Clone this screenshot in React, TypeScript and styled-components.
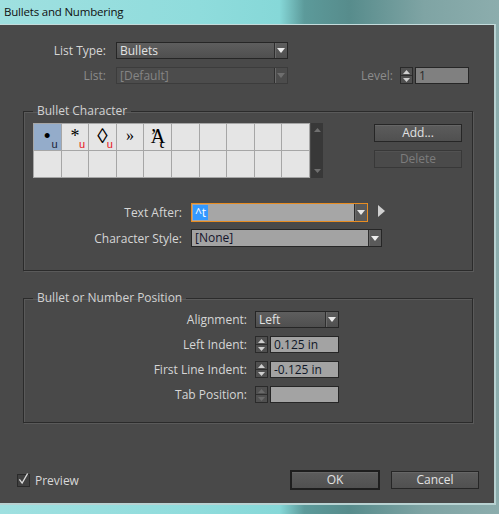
import styled, { createGlobalStyle } from "styled-components"

const FONT = `"Open Sans", "Liberation Sans", sans-serif`

const GlobalStyle = createGlobalStyle`
  html, body {
    margin: 0;
    padding: 0;
  }
  body {
    width: 499px;
    height: 514px;
    overflow: hidden;
    font-family: ${FONT};
    font-size: 12px;
    background: linear-gradient(90deg, #9fe0e0 0%, #8fdcdc 40%, #86d8d8 56%, #5c9a9a 61%, #578c8c 70%, #7fa4a4 85%, #8cadad 100%);
  }
  * { box-sizing: border-box; }
`

type Dir = "up" | "down" | "right"

function Tri({ dir, size = 7, color = "#e6e6e6" }: { dir: Dir; size?: number; color?: string }) {
  const h = Math.round(size * 0.6)
  if (dir === "right") {
    return (
      <svg width={h} height={size} viewBox={`0 0 ${h} ${size}`}>
        <polygon points={`0,0 ${h},${size / 2} 0,${size}`} fill={color} />
      </svg>
    )
  }
  const pts = dir === "down" ? `0,0 ${size},0 ${size / 2},${h}` : `0,${h} ${size},${h} ${size / 2},0`
  return (
    <svg width={size} height={h} viewBox={`0 0 ${size} ${h}`}>
      <polygon points={pts} fill={color} />
    </svg>
  )
}

function Select({ value, width, disabled, light }: { value: string; width: number; disabled?: boolean; light?: boolean }) {
  return (
    <SSelect $width={width} $disabled={disabled} $light={light}>
      <SValue>{value}</SValue>
      <SArrowBox $light={light}>
        <Tri dir="down" size={8} color={disabled ? "#6e6e6e" : "#ececec"} />
      </SArrowBox>
    </SSelect>
  )
}

function Spinner({ disabled }: { disabled?: boolean }) {
  const c = disabled ? "#6a6a6a" : "#cfcfcf"
  return (
    <SSpinner>
      <SSpinHalf><Tri dir="up" size={7} color={c} /></SSpinHalf>
      <SSpinHalf><Tri dir="down" size={7} color={c} /></SSpinHalf>
    </SSpinner>
  )
}

const cells: { glyph: string; size: number; mark?: "dark" | "red"; tight?: boolean }[] = [
  { glyph: "•", size: 21, mark: "dark" },
  { glyph: "*", size: 18, mark: "red" },
  { glyph: "◊", size: 21, mark: "red" },
  { glyph: "»", size: 16 },
  { glyph: "ʼĄ", size: 20, tight: true },
]

export default function App() {
  return (
    <>
      <GlobalStyle />
      <SWindow>
        <STitleBar>Bullets and Numbering</STitleBar>
        <SDialog>
          <STopForm>
            <SRow>
              <SLabel $width={106}>List Type:</SLabel>
              <Select value="Bullets" width={172} />
            </SRow>
            <SRow>
              <SLabel $width={106} $disabled>List:</SLabel>
              <Select value="[Default]" width={172} disabled />
              <SLevel>
                <SLabel $disabled>Level:</SLabel>
                <SSpinGroup>
                  <Spinner />
                  <SInput $width={54} $dim>1</SInput>
                </SSpinGroup>
              </SLevel>
            </SRow>
          </STopForm>

          <SGroup $pad="4px 10px 23px 9px">
            <SLegend>Bullet Character</SLegend>
            <SCharRow>
              <SGridWrap>
                <SGrid>
                  {Array.from({ length: 20 }).map((_, i) => {
                    const c = cells[i]
                    return (
                      <SCell key={i} $selected={i === 0}>
                        {c && <SGlyph $size={c.size} $tight={c.tight}>{c.glyph}</SGlyph>}
                        {c?.mark && <SMark $red={c.mark === "red"}>u</SMark>}
                      </SCell>
                    )
                  })}
                </SGrid>
                <SScrollbar>
                  <Tri dir="up" size={7} color="#6f6f6f" />
                  <Tri dir="down" size={7} color="#6f6f6f" />
                </SScrollbar>
              </SGridWrap>
              <SButtonCol>
                <SButton $width={88}>Add...</SButton>
                <SButton $width={88} $disabled>Delete</SButton>
              </SButtonCol>
            </SCharRow>

            <SFieldRow $top={25} $gap={9}>
              <SLabel $width={149}>Text After:</SLabel>
              <SCombo>
                <SComboText><SHighlight>^t</SHighlight></SComboText>
                <SArrowBox $light>
                  <Tri dir="down" size={8} />
                </SArrowBox>
              </SCombo>
              <SSideArrow>
                <Tri dir="right" size={12} color="#d0d0d0" />
              </SSideArrow>
            </SFieldRow>
            <SFieldRow $top={7} $gap={9}>
              <SLabel $width={149}>Character Style:</SLabel>
              <Select value="[None]" width={191} light />
            </SFieldRow>
          </SGroup>

          <SGroup $pad="5px 10px 19px 9px">
            <SLegend>Bullet or Number Position</SLegend>
            <SFieldRow $top={0} $gap={8}>
              <SLabel $width={214}>Alignment:</SLabel>
              <Select value="Left" width={84} />
            </SFieldRow>
            <SFieldRow $top={8} $gap={8}>
              <SLabel $width={214}>Left Indent:</SLabel>
              <SSpinGroup>
                <Spinner />
                <SInput $width={69}>0.125 in</SInput>
              </SSpinGroup>
            </SFieldRow>
            <SFieldRow $top={8} $gap={8}>
              <SLabel $width={214}>First Line Indent:</SLabel>
              <SSpinGroup>
                <Spinner />
                <SInput $width={69}>-0.125 in</SInput>
              </SSpinGroup>
            </SFieldRow>
            <SFieldRow $top={8} $gap={8}>
              <SLabel $width={214}>Tab Position:</SLabel>
              <SSpinGroup>
                <Spinner disabled />
                <SInput $width={69}></SInput>
              </SSpinGroup>
            </SFieldRow>
          </SGroup>

          <SFooter>
            <SCheckLabel>
              <SCheckbox>
                <svg width="12" height="14" viewBox="0 0 12 14">
                  <polyline points="1.5,7.5 4.5,11.5 10.5,1" fill="none" stroke="#dcdcdc" strokeWidth="1.5" />
                </svg>
              </SCheckbox>
              Preview
            </SCheckLabel>
            <SFooterButtons>
              <SButton $width={90} $default>OK</SButton>
              <SButton $width={88}>Cancel</SButton>
            </SFooterButtons>
          </SFooter>
        </SDialog>
      </SWindow>
    </>
  )
}

const SWindow = styled.div`
  display: flex;
  flex-direction: column;
  width: 499px;
  height: 514px;
`
const STitleBar = styled.div`
  height: 24px;
  padding-left: 4px;
  line-height: 23px;
  font-size: 11.5px;
  letter-spacing: -0.2px;
  color: #101010;
`
const SDialog = styled.div`
  display: flex;
  flex-direction: column;
  width: 496px;
  height: 481px;
  background: #494949;
  border-top: 1px solid #c4dcdc;
  border-right: 2px solid #b8d2d2;
  border-bottom: 2px solid #b8d2d2;
  color: #d4d4d4;
`
const STopForm = styled.div`
  display: flex;
  flex-direction: column;
  gap: 8px;
  padding: 17px 25px 0 0;
`
const SRow = styled.div`
  display: flex;
  align-items: center;
  gap: 10px;
  height: 17px;
`
const SLabel = styled.span<{ $width?: number; $disabled?: boolean }>`
  ${(p) => (p.$width ? `width: ${p.$width}px;` : "")}
  flex-shrink: 0;
  text-align: right;
  white-space: nowrap;
  color: ${(p) => (p.$disabled ? "#8c8c8c" : "#d6d6d6")};
`
const SSelect = styled.div<{ $width: number; $disabled?: boolean; $light?: boolean }>`
  display: flex;
  width: ${(p) => p.$width}px;
  height: ${(p) => (p.$light ? 18 : 17)}px;
  border: 1px solid ${(p) => (p.$disabled ? "#3c3c3c" : "#262626")};
  background: ${(p) =>
    p.$light ? "#a3a3a3" : p.$disabled ? "#4c4c4c" : "linear-gradient(#5e5e5e, #4f4f4f)"};
  color: ${(p) => (p.$light ? "#14142a" : p.$disabled ? "#858585" : "#e2e2e2")};
  line-height: 15px;
`
const SValue = styled.span`
  flex: 1;
  padding-left: 3px;
  white-space: nowrap;
  overflow: hidden;
`
const SArrowBox = styled.span<{ $light?: boolean }>`
  display: flex;
  align-items: center;
  justify-content: center;
  width: 13px;
  border-left: 1px solid #2e2e2e;
  box-shadow: inset 1px 0 0 #6a6a6a;
  background: ${(p) => (p.$light ? "#5a5a5a" : "transparent")};
`
const SLevel = styled.div`
  display: flex;
  align-items: center;
  gap: 7px;
  margin-left: auto;
`
const SSpinGroup = styled.div`
  display: flex;
  gap: 2px;
  height: 17px;
`
const SSpinner = styled.div`
  display: flex;
  flex-direction: column;
  width: 13px;
  border: 1px solid #2a2a2a;
  background: #505050;
`
const SSpinHalf = styled.span`
  flex: 1;
  display: flex;
  align-items: center;
  justify-content: center;
  & + & {
    border-top: 1px solid #2e2e2e;
  }
`
const SInput = styled.div<{ $width: number; $dim?: boolean }>`
  width: ${(p) => p.$width}px;
  border: 1px solid #262626;
  background: ${(p) => (p.$dim ? "#808080" : "#a3a3a3")};
  color: ${(p) => (p.$dim ? "#2a2a2a" : "#101828")};
  padding-left: 3px;
  line-height: 15px;
  white-space: nowrap;
`
const SGroup = styled.fieldset<{ $pad: string }>`
  margin: 19px 21px 0 23px;
  min-width: 0;
  padding: ${(p) => p.$pad};
  border: 1px solid #2b2b2b;
  box-shadow: 1px 1px 0 #5a5a5a, inset 1px 1px 0 #5a5a5a;
`
const SLegend = styled.legend`
  margin-left: 0;
  padding: 0 4px;
  line-height: 16px;
  color: #d2d2d2;
`
const SCharRow = styled.div`
  display: flex;
  justify-content: space-between;
  align-items: flex-start;
`
const SGridWrap = styled.div`
  display: flex;
  gap: 1px;
`
const SGrid = styled.div`
  display: grid;
  grid-template-columns: repeat(10, 1fr);
  grid-auto-rows: 26px;
  gap: 1px;
  width: 277px;
  padding: 1px;
  background: #a6a6a6;
`
const SCell = styled.div<{ $selected?: boolean }>`
  position: relative;
  display: flex;
  align-items: center;
  justify-content: center;
  background: ${(p) => (p.$selected ? "#94acca" : "#e5e5e5")};
  color: #000;
`
const SGlyph = styled.span<{ $size: number; $tight?: boolean }>`
  font-family: "Liberation Serif", "DejaVu Serif", serif;
  font-size: ${(p) => p.$size}px;
  line-height: 1;
  margin-top: -2px;
  letter-spacing: ${(p) => (p.$tight ? "-6px" : "0")};
  ${(p) => (p.$tight ? "padding-right: 6px;" : "")}
`
const SMark = styled.span<{ $red?: boolean }>`
  position: absolute;
  right: 3px;
  bottom: 0;
  font-size: 11px;
  line-height: 11px;
  font-family: "Liberation Sans", sans-serif;
  color: ${(p) => (p.$red ? "#e8141c" : "#1a2236")};
`
const SScrollbar = styled.div`
  display: flex;
  flex-direction: column;
  justify-content: space-between;
  align-items: center;
  width: 12px;
  height: 55px;
  padding: 5px 0;
  background: #383838;
`
const SButtonCol = styled.div`
  display: flex;
  flex-direction: column;
  gap: 8px;
  margin-top: 1px;
`
const SButton = styled.div<{ $width: number; $disabled?: boolean; $default?: boolean }>`
  width: ${(p) => p.$width}px;
  height: ${(p) => (p.$default ? 20 : 18)}px;
  border: ${(p) => (p.$default ? "2px solid #1e1e1e" : `1px solid ${p.$disabled ? "#383838" : "#262626"}`)};
  background: ${(p) => (p.$disabled ? "#4a4a4a" : "linear-gradient(#5c5c5c, #505050)")};
  box-shadow: inset 0 1px 0 ${(p) => (p.$disabled ? "#525252" : "#666")};
  color: ${(p) => (p.$disabled ? "#7c7c7c" : "#e2e2e2")};
  text-align: center;
  line-height: ${(p) => (p.$default ? 15 : 16)}px;
`
const SFieldRow = styled.div<{ $top: number; $gap: number }>`
  display: flex;
  align-items: center;
  gap: ${(p) => p.$gap}px;
  margin-top: ${(p) => p.$top}px;
`
const SCombo = styled.div`
  display: flex;
  width: 177px;
  height: 19px;
  border: 1px solid #e88d22;
  background: #a6a6a6;
`
const SComboText = styled.span`
  flex: 1;
  display: flex;
  align-items: center;
  padding: 1px;
`
const SHighlight = styled.span`
  height: 100%;
  padding: 0 2px;
  background: #3399ff;
  color: #fff;
  line-height: 15px;
`
const SSideArrow = styled.span`
  display: flex;
  margin-left: 1px;
  margin-top: -4px;
`
const SFooter = styled.div`
  display: flex;
  align-items: center;
  justify-content: space-between;
  margin-top: auto;
  padding: 0 15px 13px 17px;
`
const SCheckLabel = styled.div`
  display: flex;
  align-items: center;
  gap: 5px;
  color: #d8d8d8;
`
const SCheckbox = styled.span`
  display: flex;
  align-items: flex-end;
  justify-content: center;
  width: 13px;
  height: 13px;
  border: 1px solid #2a2a2a;
  background: #404040;
  overflow: visible;
`
const SFooterButtons = styled.div`
  display: flex;
  align-items: center;
  gap: 11px;
`
